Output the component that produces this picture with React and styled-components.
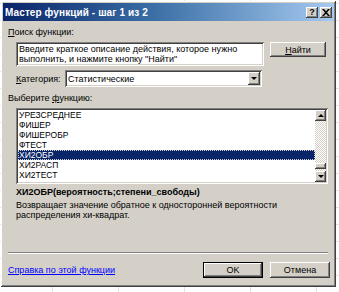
import React, { useState } from "react";
import styled, { createGlobalStyle, css } from "styled-components";

const GlobalStyle = createGlobalStyle`
  body {
    margin: 0;
    background-color: #ffffff;
    background-image:
      linear-gradient(to right, #e2e2e2 1px, transparent 1px),
      linear-gradient(to bottom, #e2e2e2 1px, transparent 1px);
    background-size: 66px 17px;
    background-position: -14px 3px;
    font-family: "Liberation Sans", Arial, sans-serif;
    font-size: 9px;
    color: #000000;
  }
`;

// classic 3d borders
const raised = css`
  background: #d4d0c8;
  box-shadow: inset -1px -1px #404040, inset 1px 1px #ffffff,
    inset -2px -2px #808080, inset 2px 2px #d4d0c8;
`;
const sunken = css`
  background: #ffffff;
  box-shadow: inset 1px 1px #808080, inset -1px -1px #ffffff,
    inset 2px 2px #404040, inset -2px -2px #d4d0c8;
`;

const functions = [
  "УРЕЗСРЕДНЕЕ",
  "ФИШЕР",
  "ФИШЕРОБР",
  "ФТЕСТ",
  "ХИ2ОБР",
  "ХИ2РАСП",
  "ХИ2ТЕСТ",
];

const App = () => {
  const [selected, setSelected] = useState("ХИ2ОБР");
  return (
    <>
      <GlobalStyle />
      <Window>
        <TitleBar>
          <Title>Мастер функций - шаг 1 из 2</Title>
          <CaptionButtons>
            <CaptionButton>?</CaptionButton>
            <CaptionButton>
              <svg width="8" height="7" viewBox="0 0 8 7">
                <path d="M0 0h2l2 2.2L6 0h2L5 3.5 8 7H6L4 4.8 2 7H0l3-3.5z" fill="#000" />
              </svg>
            </CaptionButton>
          </CaptionButtons>
        </TitleBar>
        <Body>
          <Label>
            <u>П</u>оиск функции:
          </Label>
          <SearchRow>
            <SearchBox>
              Введите краткое описание действия, которое нужно выполнить, и
              нажмите кнопку "Найти"
            </SearchBox>
            <Button width={56} height={15}>
              <u>Н</u>айти
            </Button>
          </SearchRow>
          <CategoryRow>
            <CategoryLabel>
              <u>К</u>атегория:
            </CategoryLabel>
            <Select>
              <SelectValue>Статистические</SelectValue>
              <DropButton>
                <Arrow />
              </DropButton>
            </Select>
          </CategoryRow>
          <ListLabel>
            Выберите <u>ф</u>ункцию:
          </ListLabel>
          <List>
            <Rows>
              {functions.map((name) => (
                <Row
                  key={name}
                  active={name === selected}
                  onClick={() => setSelected(name)}
                >
                  {name}
                </Row>
              ))}
            </Rows>
            <ScrollBar>
              <ScrollButton>
                <Arrow up />
              </ScrollButton>
              <Track>
                <Thumb />
              </Track>
              <ScrollButton>
                <Arrow />
              </ScrollButton>
            </ScrollBar>
          </List>
          <Signature>ХИ2ОБР(вероятность;степени_свободы)</Signature>
          <Description>
            Возвращает значение обратное к односторонней вероятности
            <br />
            распределения хи-квадрат.
          </Description>
          <Separator />
          <Footer>
            <HelpLink href="#">Справка по этой функции</HelpLink>
            <Buttons>
              <Button width={60} height={16} primary>
                OK
              </Button>
              <Button width={60} height={16}>
                Отмена
              </Button>
            </Buttons>
          </Footer>
        </Body>
      </Window>
    </>
  );
};

const Window = styled.div`
  ${raised};
  margin: 1px 0 0 1px;
  width: 335px;
  height: 286px;
  box-sizing: border-box;
  padding: 2px;
  display: flex;
  flex-direction: column;
`;

const TitleBar = styled.div`
  height: 18px;
  display: flex;
  align-items: center;
  justify-content: space-between;
  padding: 0 2px 0 2px;
  background: linear-gradient(to right, #0a246a 0%, #3a6ea5 45%, #a6caf0 100%);
`;

const Title = styled.span`
  color: #ffffff;
  font-weight: bold;
  font-size: 10px;
  letter-spacing: 0.1px;
`;

const CaptionButtons = styled.div`
  display: flex;
  gap: 2px;
`;

const CaptionButton = styled.div`
  ${raised};
  width: 12px;
  height: 11px;
  display: flex;
  align-items: center;
  justify-content: center;
  font-weight: bold;
  font-size: 9px;
  line-height: 1;
`;

const Body = styled.div`
  flex: 1;
  display: flex;
  flex-direction: column;
  padding: 0 4px 7px 5px;
`;

const Label = styled.div`
  margin-top: 5px;
  line-height: 12px;
`;

const SearchRow = styled.div`
  display: flex;
  align-items: flex-start;
  margin-top: 4px;
  padding-left: 8px;
  gap: 6px;
`;

const SearchBox = styled.div`
  ${sunken};
  width: 248px;
  height: 24px;
  box-sizing: border-box;
  padding: 2px 3px;
  line-height: 10px;
`;

const Button = styled.div`
  ${raised};
  width: ${(p) => p.width}px;
  height: ${(p) => p.height}px;
  display: flex;
  align-items: center;
  justify-content: center;
  box-sizing: border-box;
  ${(p) =>
    p.primary &&
    css`
      box-shadow: inset 0 0 0 1px #000000, inset -2px -2px #404040,
        inset 2px 2px #ffffff, inset -3px -3px #808080;
    `}
`;

const CategoryRow = styled.div`
  display: flex;
  align-items: center;
  margin-top: 4px;
  padding-left: 8px;
`;

const CategoryLabel = styled.span`
  width: 49px;
`;

const Select = styled.div`
  ${sunken};
  width: 197px;
  height: 17px;
  box-sizing: border-box;
  padding: 2px;
  display: flex;
  align-items: center;
`;

const SelectValue = styled.span`
  flex: 1;
  padding-left: 1px;
`;

const DropButton = styled.div`
  ${raised};
  width: 12px;
  height: 13px;
  display: flex;
  align-items: center;
  justify-content: center;
`;

const Arrow = styled.span`
  width: 0;
  height: 0;
  border-left: 3px solid transparent;
  border-right: 3px solid transparent;
  ${(p) =>
    p.up
      ? css`
          border-bottom: 3px solid #000;
        `
      : css`
          border-top: 3px solid #000;
        `}
`;

const ListLabel = styled.div`
  margin-top: 5px;
  line-height: 12px;
`;

const List = styled.div`
  ${sunken};
  margin: 4px 0 0 8px;
  width: 312px;
  height: 76px;
  box-sizing: border-box;
  padding: 2px;
  display: flex;
`;

const Rows = styled.div`
  flex: 1;
  display: flex;
  flex-direction: column;
`;

const Row = styled.div`
  height: 10px;
  line-height: 10px;
  padding-left: 1px;
  font-size: 8.5px;
  box-sizing: border-box;
  ${(p) =>
    p.active &&
    css`
      background: #0a246a;
      color: #ffffff;
      outline: 1px dotted #d4d0c8;
      outline-offset: -1px;
    `}
`;

const ScrollBar = styled.div`
  width: 11px;
  display: flex;
  flex-direction: column;
`;

const ScrollButton = styled.div`
  ${raised};
  height: 11px;
  display: flex;
  align-items: center;
  justify-content: center;
`;

const Track = styled.div`
  flex: 1;
  display: flex;
  flex-direction: column;
  justify-content: flex-end;
  background: repeating-conic-gradient(#ffffff 0 25%, #d4d0c8 0 50%) 0 0 / 2px 2px;
`;

const Thumb = styled.div`
  ${raised};
  height: 6px;
  margin-bottom: 2px;
`;

const Signature = styled.div`
  margin: 2px 0 0 8px;
  font-weight: bold;
  line-height: 12px;
`;

const Description = styled.div`
  margin: 2px 0 0 8px;
  line-height: 10px;
`;

const Separator = styled.div`
  margin-top: auto;
  height: 0;
  border-top: 1px solid #808080;
  border-bottom: 1px solid #ffffff;
  margin-right: 2px;
`;

const Footer = styled.div`
  display: flex;
  justify-content: space-between;
  align-items: center;
  margin-top: 8px;
`;

const HelpLink = styled.a`
  color: #0000ff;
  text-decoration: underline;
`;

const Buttons = styled.div`
  display: flex;
  gap: 7px;
`;

export default App;
